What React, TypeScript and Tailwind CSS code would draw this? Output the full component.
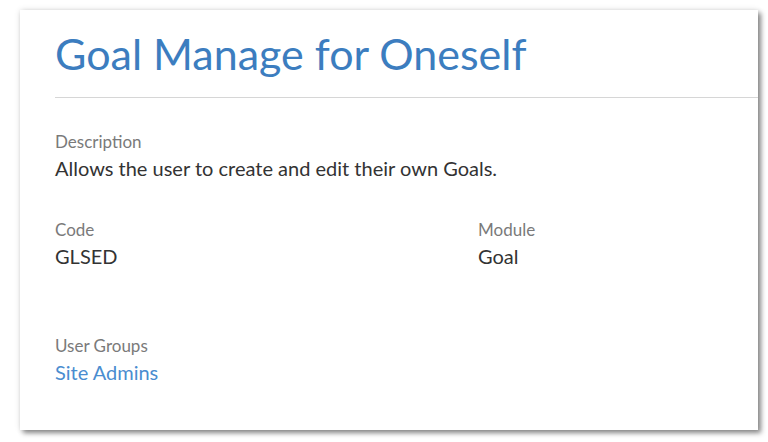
export default function App() {
  return (
    <div className="w-[768px] h-[442px] bg-white pl-[20px] pt-[10px] font-['Lato','Open_Sans',sans-serif]">
      <div className="w-[738px] h-[420px] bg-white shadow-[3px_3px_5px_rgba(0,0,0,0.45),0_0_6px_rgba(0,0,0,0.12)] pl-[35px]">
        {/* Cabeçalho */}
        <div className="h-[88px] flex items-end border-b border-[#d6d6d6] pb-[22px]">
          <h1 className="text-[43px] leading-none text-[#3c7dbf]">Goal Manage for Oneself</h1>
        </div>

        <div className="pt-[35px]">
          <p className="text-[17px] leading-[18px] text-[#7a7a7a]">Description</p>
          <p className="mt-[6px] text-[20px] leading-[22px] text-[#333]">Allows the user to create and edit their own Goals.</p>
        </div>

        <div className="grid grid-cols-[423px_1fr] pt-[42px]">
          <div>
            <p className="text-[17px] leading-[18px] text-[#7a7a7a]">Code</p>
            <p className="mt-[6px] text-[20px] leading-[22px] text-[#333]">GLSED</p>
          </div>
          <div>
            <p className="text-[17px] leading-[18px] text-[#7a7a7a]">Module</p>
            <p className="mt-[6px] text-[20px] leading-[22px] text-[#333]">Goal</p>
          </div>
        </div>

        <div className="pt-[70px]">
          <p className="text-[17px] leading-[18px] text-[#7a7a7a]">User Groups</p>
          <a className="block mt-[6px] text-[20px] leading-[22px] text-[#4a8dd0]">Site Admins</a>
        </div>
      </div>
    </div>
  )
}
